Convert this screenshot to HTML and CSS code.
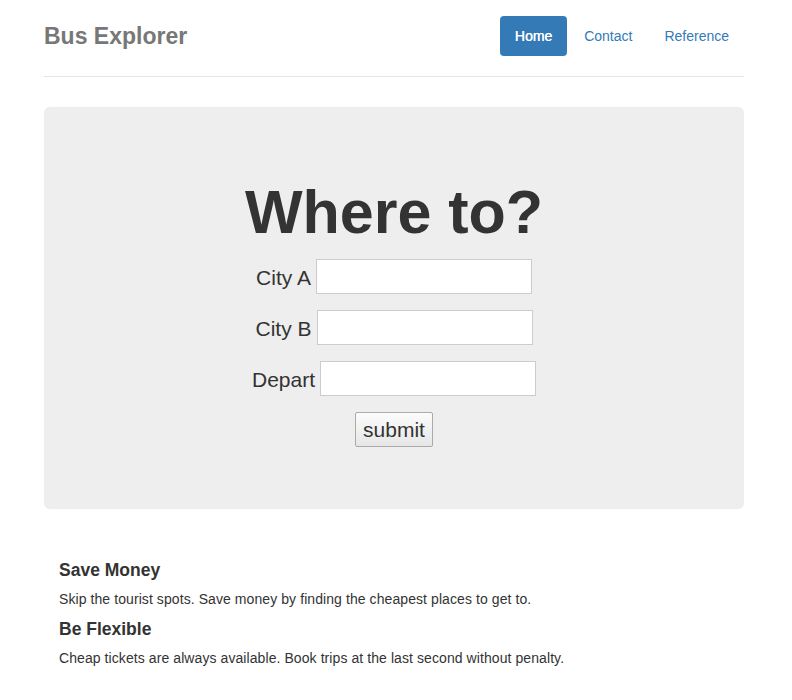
FILE: index.html
```html
<!DOCTYPE html>
<html>
<head>
<meta charset="utf-8">
<title>Bus Explorer</title>
<link rel="stylesheet" href="styles.css">
</head>
<body>
<div class="container">
  <header class="header">
    <h3 class="brand">Bus Explorer</h3>
    <nav>
      <ul class="nav-pills">
        <li class="active"><a href="#">Home</a></li>
        <li><a href="#">Contact</a></li>
        <li><a href="#">Reference</a></li>
      </ul>
    </nav>
  </header>

  <section class="jumbotron">
    <h1>Where to?</h1>
    <form class="trip-form">
      <div class="row"><label for="a">City A</label><input id="a" type="text"></div>
      <div class="row"><label for="b">City B</label><input id="b" type="text"></div>
      <div class="row"><label for="d">Depart</label><input id="d" type="text"></div>
      <div class="row"><button type="button" class="submit">submit</button></div>
    </form>
  </section>

  <section class="marketing">
    <h4>Save Money</h4>
    <p>Skip the tourist spots. Save money by finding the cheapest places to get to.</p>
    <h4>Be Flexible</h4>
    <p>Cheap tickets are always available. Book trips at the last second without penalty.</p>
  </section>
</div>
</body>
</html>
```
FILE: styles.css
```css
* { box-sizing: border-box; }
html, body { margin: 0; padding: 0; background: #fff; }
body {
  font-family: "Liberation Sans", Arial, sans-serif;
  font-size: 14px;
  line-height: 1.42857;
  color: #333;
  padding-top: 16px;
}
.container {
  width: 700px;
  margin-left: 44px;
}
.header {
  display: flex;
  justify-content: space-between;
  align-items: center;
  padding-bottom: 20px;
  border-bottom: 1px solid #e5e5e5;
}
.brand {
  margin: 0;
  font-size: 23px;
  font-weight: bold;
  line-height: 40px;
  color: #777;
}
.nav-pills {
  display: flex;
  list-style: none;
  margin: 0;
  padding: 0;
}
.nav-pills li + li { margin-left: 2px; }
.nav-pills a {
  display: block;
  padding: 10px 15px;
  line-height: 20px;
  border-radius: 4px;
  color: #337ab7;
  text-decoration: none;
}
.nav-pills .active a {
  background: #337ab7;
  color: #fff;
  text-shadow: 0.3px 0 0 #fff;
}
.jumbotron {
  margin-top: 30px;
  background: #eee;
  border-radius: 6px;
  padding: 72px 60px 62px;
  text-align: center;
}
.jumbotron h1 {
  margin: 0 0 13px;
  font-size: 61px;
  line-height: 67px;
  font-weight: bold;
  color: #333;
}
.trip-form {
  display: flex;
  flex-direction: column;
  gap: 16px;
  font-size: 21px;
}
.row {
  display: flex;
  justify-content: center;
  align-items: center;
  gap: 5px;
  height: 35px;
}
.row label {
  padding-top: 2px;
  color: #333;
}
.row input {
  width: 216px;
  height: 35px;
  border: 1px solid #ccc;
  background: #fff;
  margin: 0;
  font: inherit;
}
.submit {
  font: inherit;
  color: #333;
  height: 35px;
  width: 78px;
  padding: 0;
  border: 1px solid #aaa;
  border-radius: 2px;
  background: linear-gradient(#fcfcfc, #e6e6e6);
}
.marketing {
  margin-top: 51px;
  padding: 0 15px;
}
.marketing h4 {
  margin: 0 0 9px;
  font-size: 17.5px;
  line-height: 20px;
  font-weight: bold;
}
.marketing p {
  margin: 0 0 10px;
  line-height: 20px;
  letter-spacing: 0.08px;
}
```
